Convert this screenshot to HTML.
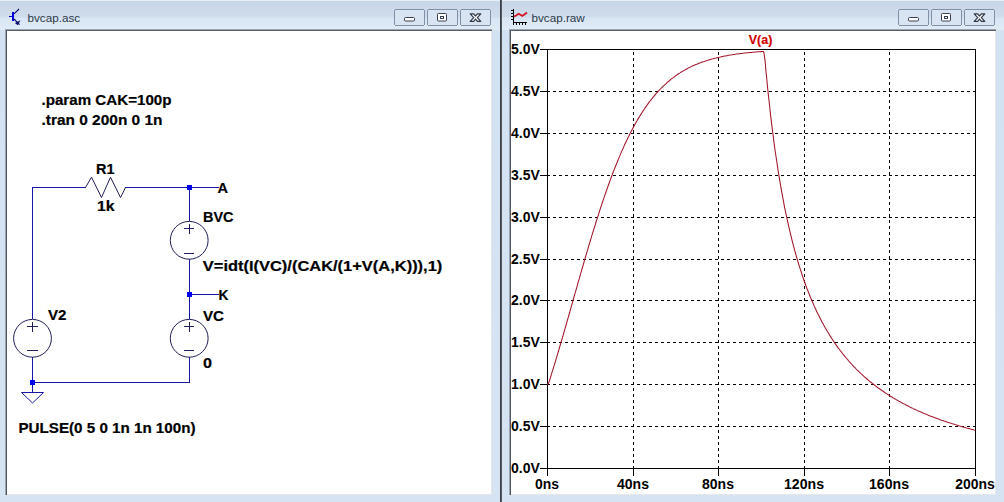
<!DOCTYPE html>
<html><head><meta charset="utf-8"><style>
html,body{margin:0;padding:0;background:#d2e0ef;overflow:hidden;}
svg{display:block;}
.tt{font-family:"Liberation Sans",sans-serif;font-size:11.7px;fill:#2a3848;}
.btn rect{fill:#d8e4f1;stroke:#8090a6;stroke-width:1;}
.w{stroke:#1818a8;stroke-width:1;fill:none;}
.c{stroke:#20205a;stroke-width:1;fill:none;}
.jn{fill:#0000f0;}
.sl{font-family:"Liberation Sans",sans-serif;font-weight:bold;font-size:14px;fill:#000;stroke:#000;stroke-width:0.2px;}
.yl{font-family:"Liberation Sans",sans-serif;font-weight:bold;font-size:14.5px;fill:#000;}
.ax{stroke:#000;stroke-width:1;}
.dash{stroke:#000;stroke-width:1;stroke-dasharray:3 3;}
</style></head><body>
<svg width="1004" height="502" viewBox="0 0 1004 502" shape-rendering="crispEdges">
<defs>
<linearGradient id="title" x1="0" y1="0" x2="0" y2="30" gradientUnits="userSpaceOnUse">
<stop offset="0" stop-color="#c6d5e7"/><stop offset="0.55" stop-color="#cfdcec"/><stop offset="0.62" stop-color="#d9e6f4"/><stop offset="1" stop-color="#e0ebf7"/>
</linearGradient>
<linearGradient id="side" x1="0" y1="0" x2="0" y2="502" gradientUnits="userSpaceOnUse">
<stop offset="0" stop-color="#d3e2f2"/><stop offset="1" stop-color="#d5e3f3"/>
</linearGradient>
</defs>

<g transform="translate(-4,0)">
  <rect x="0" y="0" width="505" height="502" fill="url(#side)"/>
  <rect x="0" y="0" width="505" height="30" fill="url(#title)"/>
  <rect x="0" y="0" width="505" height="1" fill="#e9eff6"/>
  <rect x="11" y="31" width="484" height="463" fill="#fff"/>
  <rect x="9" y="29" width="1" height="466" fill="#9aa4b2"/>
  <rect x="9" y="29" width="487" height="1" fill="#9aa4b2"/>
  <rect x="10" y="30" width="1" height="465" fill="#50565f"/>
  <rect x="10" y="30" width="486" height="1" fill="#585e68"/>
  <rect x="495" y="31" width="1" height="464" fill="#e4e6ea"/>
  <rect x="11" y="494" width="485" height="1" fill="#e4e6ea"/>
  <g shape-rendering="crispEdges">
  <rect x="16" y="12" width="2" height="9" fill="#0000e0"/>
  <rect x="13" y="16" width="3" height="1" fill="#0000c0"/>
</g>
<g stroke="#101070" stroke-width="1.1" fill="none" shape-rendering="auto">
  <line x1="18" y1="13.8" x2="23" y2="9"/>
  <line x1="18" y1="19" x2="23.6" y2="24.6"/>
  <path d="M20.2,23.2 L22.8,21.8 L21.6,24.2 Z" fill="#101070" stroke-width="1.4"/>
</g>
  <text x="31.5" y="21.5" class="tt">bvcap.asc</text>
  <g class="btn">
    <rect x="398.5" y="9.5" width="30" height="16" rx="2"/>
    <rect x="431.5" y="9.5" width="30" height="16" rx="2"/>
    <rect x="464.5" y="9.5" width="30" height="16" rx="2"/>
  </g>
  <rect x="408.5" y="17.5" width="10" height="3.5" rx="1" fill="#fff" stroke="#3a4250" stroke-width="1" shape-rendering="geometricPrecision"/>
  <rect x="441.5" y="13.5" width="9" height="7.5" rx="0.8" fill="#fff" stroke="#3a4250" stroke-width="1" shape-rendering="geometricPrecision"/>
  <rect x="444.5" y="16.5" width="3" height="2" fill="none" stroke="#3a4250" stroke-width="1" shape-rendering="geometricPrecision"/>
  <path d="M474.2,13.8 H477.6 L479.5,16 L481.4,13.8 H484.8 L481.3,17.6 L484.8,21.4 H481.4 L479.5,19.2 L477.6,21.4 H474.2 L477.7,17.6 Z" fill="#fff" stroke="#2e3644" stroke-width="1.15" stroke-linejoin="round" shape-rendering="auto"/>
</g>

<g transform="translate(500,0)">
  <rect x="0" y="0" width="505" height="502" fill="url(#side)"/>
  <rect x="0" y="0" width="505" height="30" fill="url(#title)"/>
  <rect x="0" y="0" width="505" height="1" fill="#e9eff6"/>
  <rect x="11" y="31" width="484" height="463" fill="#fff"/>
  <rect x="9" y="29" width="1" height="466" fill="#9aa4b2"/>
  <rect x="9" y="29" width="487" height="1" fill="#9aa4b2"/>
  <rect x="10" y="30" width="1" height="465" fill="#50565f"/>
  <rect x="10" y="30" width="486" height="1" fill="#585e68"/>
  <rect x="495" y="31" width="1" height="464" fill="#e4e6ea"/>
  <rect x="11" y="494" width="485" height="1" fill="#e4e6ea"/>
  <g fill="none" stroke-width="1">
  <path d="M13.5,9 V22.5 H27" stroke="#000"/>
  <path d="M11,10.5 H13 M11,13.5 H13 M11,16.5 H13 M11,19.5 H13 M13.5,23 V25 M16.5,23 V25 M19.5,23 V25 M22.5,23 V25 M25.5,23 V25" stroke="#000"/>
  <path d="M14,16.7 L18.7,13.7 L22.4,16 L27,12.5" stroke="#d81020" stroke-width="1.8" shape-rendering="auto"/>
</g>
  <text x="31.5" y="21.5" class="tt">bvcap.raw</text>
  <g class="btn">
    <rect x="398.5" y="9.5" width="30" height="16" rx="2"/>
    <rect x="431.5" y="9.5" width="30" height="16" rx="2"/>
    <rect x="464.5" y="9.5" width="30" height="16" rx="2"/>
  </g>
  <rect x="408.5" y="17.5" width="10" height="3.5" rx="1" fill="#fff" stroke="#3a4250" stroke-width="1" shape-rendering="geometricPrecision"/>
  <rect x="441.5" y="13.5" width="9" height="7.5" rx="0.8" fill="#fff" stroke="#3a4250" stroke-width="1" shape-rendering="geometricPrecision"/>
  <rect x="444.5" y="16.5" width="3" height="2" fill="none" stroke="#3a4250" stroke-width="1" shape-rendering="geometricPrecision"/>
  <path d="M474.2,13.8 H477.6 L479.5,16 L481.4,13.8 H484.8 L481.3,17.6 L484.8,21.4 H481.4 L479.5,19.2 L477.6,21.4 H474.2 L477.7,17.6 Z" fill="#fff" stroke="#2e3644" stroke-width="1.15" stroke-linejoin="round" shape-rendering="auto"/>
</g>
<rect x="500" y="0" width="1" height="502" fill="#3a3f48"/>
<rect x="501" y="0" width="1" height="502" fill="#555a63"/>

<!-- schematic -->
<text x="41.5" y="105" class="sl" textLength="130" lengthAdjust="spacingAndGlyphs">.param CAK=100p</text>
<text x="41.5" y="125" class="sl" textLength="121" lengthAdjust="spacingAndGlyphs">.tran 0 200n 0 1n</text>
<g class="w">
<path d="M32.5,319 V187.5 H86"/>
<path d="M125,187.5 H219"/>
<path d="M189.5,187.5 V221"/>
<path d="M189.5,259 V319"/>
<path d="M189.5,294.5 H219"/>
<path d="M189.5,357 V382.5 H32.5 V357"/>
<path d="M32.5,382 V392.5"/>
</g>
<g class="c" shape-rendering="auto">
<path d="M85.5,187.5 L91.5,177.2 L101.5,197.5 L110.5,177.2 L120.5,197.5 L125.5,187.5"/>
<circle cx="189.2" cy="240.3" r="18.9"/>
<circle cx="189.2" cy="338.3" r="18.9"/>
<circle cx="32.5" cy="338.3" r="18.9"/>
</g>
<g class="c">
<path d="M184,228.5 H194 M189.5,223.5 V234 M184,253.5 H194"/>
<path d="M184,326.5 H194 M189.5,321.5 V332 M184,350.5 H194"/>
<path d="M27,326.5 H38 M32.5,321.5 V332 M27,350.5 H38"/>
</g>
<path d="M21.5,392.5 H43.5 L32.5,403 Z" class="w" shape-rendering="auto"/>
<rect x="187" y="185" width="5" height="5" class="jn"/>
<rect x="187" y="292" width="5" height="5" class="jn"/>
<rect x="30" y="380" width="5" height="5" class="jn"/>
<text x="96" y="174" class="sl" textLength="18.5" lengthAdjust="spacingAndGlyphs">R1</text>
<text x="97" y="211" class="sl" textLength="17.5" lengthAdjust="spacingAndGlyphs">1k</text>
<text x="217.5" y="193" class="sl" textLength="10.5" lengthAdjust="spacingAndGlyphs">A</text>
<text x="203" y="222" class="sl" textLength="30.5" lengthAdjust="spacingAndGlyphs">BVC</text>
<text x="202.8" y="271" class="sl" textLength="239.5" lengthAdjust="spacingAndGlyphs">V=idt(I(VC)/(CAK/(1+V(A,K))),1)</text>
<text x="218.5" y="300" class="sl" textLength="10" lengthAdjust="spacingAndGlyphs">K</text>
<text x="203" y="320.5" class="sl" textLength="21" lengthAdjust="spacingAndGlyphs">VC</text>
<text x="203" y="368" class="sl" textLength="9" lengthAdjust="spacingAndGlyphs">0</text>
<text x="48" y="320" class="sl" textLength="18.5" lengthAdjust="spacingAndGlyphs">V2</text>
<text x="18.5" y="432.5" class="sl" textLength="177" lengthAdjust="spacingAndGlyphs">PULSE(0 5 0 1n 1n 100n)</text>

<!-- plot -->
<line x1="547" y1="91.5" x2="975" y2="91.5" class="dash"/><line x1="540" y1="91.5" x2="547" y2="91.5" class="ax"/><line x1="547" y1="133.5" x2="975" y2="133.5" class="dash"/><line x1="540" y1="133.5" x2="547" y2="133.5" class="ax"/><line x1="547" y1="175.5" x2="975" y2="175.5" class="dash"/><line x1="540" y1="175.5" x2="547" y2="175.5" class="ax"/><line x1="547" y1="217.5" x2="975" y2="217.5" class="dash"/><line x1="540" y1="217.5" x2="547" y2="217.5" class="ax"/><line x1="547" y1="259.5" x2="975" y2="259.5" class="dash"/><line x1="540" y1="259.5" x2="547" y2="259.5" class="ax"/><line x1="547" y1="300.5" x2="975" y2="300.5" class="dash"/><line x1="540" y1="300.5" x2="547" y2="300.5" class="ax"/><line x1="547" y1="342.5" x2="975" y2="342.5" class="dash"/><line x1="540" y1="342.5" x2="547" y2="342.5" class="ax"/><line x1="547" y1="384.5" x2="975" y2="384.5" class="dash"/><line x1="540" y1="384.5" x2="547" y2="384.5" class="ax"/><line x1="547" y1="426.5" x2="975" y2="426.5" class="dash"/><line x1="540" y1="426.5" x2="547" y2="426.5" class="ax"/><line x1="633.5" y1="469" x2="633.5" y2="49" class="dash"/><line x1="633.5" y1="468" x2="633.5" y2="476" class="ax"/><line x1="718.5" y1="469" x2="718.5" y2="49" class="dash"/><line x1="718.5" y1="468" x2="718.5" y2="476" class="ax"/><line x1="804.5" y1="469" x2="804.5" y2="49" class="dash"/><line x1="804.5" y1="468" x2="804.5" y2="476" class="ax"/><line x1="889.5" y1="469" x2="889.5" y2="49" class="dash"/><line x1="889.5" y1="468" x2="889.5" y2="476" class="ax"/><line x1="540" y1="49.5" x2="547" y2="49.5" class="ax"/><line x1="540" y1="468.5" x2="547" y2="468.5" class="ax"/><line x1="547.5" y1="468" x2="547.5" y2="476" class="ax"/><line x1="975.5" y1="468" x2="975.5" y2="476" class="ax"/>
<rect x="547.5" y="49.5" width="428" height="419" fill="none" class="ax"/>
<text x="539.8" y="54" class="yl" text-anchor="end" textLength="28.8" lengthAdjust="spacingAndGlyphs">5.0V</text><text x="539.8" y="96" class="yl" text-anchor="end" textLength="28.8" lengthAdjust="spacingAndGlyphs">4.5V</text><text x="539.8" y="138" class="yl" text-anchor="end" textLength="28.8" lengthAdjust="spacingAndGlyphs">4.0V</text><text x="539.8" y="180" class="yl" text-anchor="end" textLength="28.8" lengthAdjust="spacingAndGlyphs">3.5V</text><text x="539.8" y="222" class="yl" text-anchor="end" textLength="28.8" lengthAdjust="spacingAndGlyphs">3.0V</text><text x="539.8" y="264" class="yl" text-anchor="end" textLength="28.8" lengthAdjust="spacingAndGlyphs">2.5V</text><text x="539.8" y="305" class="yl" text-anchor="end" textLength="28.8" lengthAdjust="spacingAndGlyphs">2.0V</text><text x="539.8" y="347" class="yl" text-anchor="end" textLength="28.8" lengthAdjust="spacingAndGlyphs">1.5V</text><text x="539.8" y="389" class="yl" text-anchor="end" textLength="28.8" lengthAdjust="spacingAndGlyphs">1.0V</text><text x="539.8" y="431" class="yl" text-anchor="end" textLength="28.8" lengthAdjust="spacingAndGlyphs">0.5V</text><text x="539.8" y="473" class="yl" text-anchor="end" textLength="28.8" lengthAdjust="spacingAndGlyphs">0.0V</text>
<text x="547" y="489" class="yl" text-anchor="middle" textLength="24" lengthAdjust="spacingAndGlyphs">0ns</text><text x="633" y="489" class="yl" text-anchor="middle" textLength="32" lengthAdjust="spacingAndGlyphs">40ns</text><text x="718" y="489" class="yl" text-anchor="middle" textLength="32" lengthAdjust="spacingAndGlyphs">80ns</text><text x="804" y="489" class="yl" text-anchor="middle" textLength="40" lengthAdjust="spacingAndGlyphs">120ns</text><text x="889" y="489" class="yl" text-anchor="middle" textLength="40" lengthAdjust="spacingAndGlyphs">160ns</text><text x="975" y="489" class="yl" text-anchor="middle" textLength="39.5" lengthAdjust="spacingAndGlyphs">200ns</text>
<text x="748.8" y="44" class="yl" style="fill:#d00000;stroke:#d00000;stroke-width:0.2px;font-size:13.5px" textLength="23.5" lengthAdjust="spacingAndGlyphs">V(a)</text>
<polyline points="547.0,384.2 548.1,384.0 549.1,381.7 550.2,378.3 551.3,374.9 552.3,371.4 553.4,367.9 554.5,364.4 555.6,360.9 556.6,357.3 557.7,353.7 558.8,350.1 559.8,346.5 560.9,342.8 562.0,339.1 563.1,335.5 564.1,331.7 565.2,328.0 566.3,324.3 567.3,320.6 568.4,316.8 569.5,313.0 570.5,309.3 571.6,305.5 572.7,301.7 573.7,298.0 574.8,294.2 575.9,290.4 577.0,286.7 578.0,282.9 579.1,279.2 580.2,275.4 581.2,271.7 582.3,268.0 583.4,264.3 584.4,260.6 585.5,256.9 586.6,253.3 587.7,249.7 588.7,246.1 589.8,242.5 590.9,238.9 591.9,235.4 593.0,231.9 594.1,228.4 595.2,225.0 596.2,221.5 597.3,218.2 598.4,214.8 599.4,211.5 600.5,208.2 601.6,205.0 602.6,201.7 603.7,198.6 604.8,195.4 605.9,192.3 606.9,189.3 608.0,186.3 609.1,183.3 610.1,180.4 611.2,177.5 612.3,174.6 613.3,171.8 614.4,169.1 615.5,166.3 616.6,163.7 617.6,161.0 618.7,158.4 619.8,155.9 620.8,153.4 621.9,150.9 623.0,148.5 624.0,146.1 625.1,143.8 626.2,141.5 627.3,139.3 628.3,137.1 629.4,134.9 630.5,132.8 631.5,130.7 632.6,128.7 633.7,126.7 634.7,124.8 635.8,122.8 636.9,121.0 637.9,119.1 639.0,117.4 640.1,115.6 641.2,113.9 642.2,112.2 643.3,110.6 644.4,109.0 645.4,107.4 646.5,105.9 647.6,104.4 648.6,102.9 649.7,101.5 650.8,100.1 651.9,98.7 652.9,97.4 654.0,96.1 655.1,94.8 656.1,93.6 657.2,92.4 658.3,91.2 659.3,90.1 660.4,89.0 661.5,87.9 662.6,86.8 663.6,85.8 664.7,84.8 665.8,83.8 666.8,82.8 667.9,81.9 669.0,81.0 670.0,80.1 671.1,79.2 672.2,78.4 673.3,77.6 674.3,76.8 675.4,76.0 676.5,75.2 677.5,74.5 678.6,73.8 679.7,73.1 680.7,72.4 681.8,71.7 682.9,71.1 684.0,70.5 685.0,69.9 686.1,69.3 687.2,68.7 688.2,68.1 689.3,67.6 690.4,67.1 691.4,66.6 692.5,66.1 693.6,65.6 694.7,65.1 695.7,64.6 696.8,64.2 697.9,63.7 698.9,63.3 700.0,62.9 701.1,62.5 702.1,62.1 703.2,61.7 704.3,61.4 705.4,61.0 706.4,60.7 707.5,60.3 708.6,60.0 709.6,59.7 710.7,59.4 711.8,59.1 712.9,58.8 713.9,58.5 715.0,58.2 716.1,58.0 717.1,57.7 718.2,57.4 719.3,57.2 720.3,57.0 721.4,56.7 722.5,56.5 723.6,56.3 724.6,56.1 725.7,55.9 726.8,55.7 727.8,55.5 728.9,55.3 730.0,55.1 731.0,54.9 732.1,54.8 733.2,54.6 734.3,54.4 735.3,54.3 736.4,54.1 737.5,54.0 738.5,53.8 739.6,53.7 740.7,53.5 741.7,53.4 742.8,53.3 743.9,53.1 745.0,53.0 746.0,52.9 747.1,52.8 748.2,52.7 749.2,52.6 750.3,52.5 751.4,52.4 752.4,52.3 753.5,52.2 754.6,52.1 755.7,52.0 756.7,51.9 757.8,51.8 758.9,51.7 759.9,51.7 761.0,51.6 761.2,51.6 761.4,51.5 761.6,51.5 761.9,51.5 762.1,51.5 762.3,51.5 762.5,51.5 762.7,51.5 762.9,51.4 763.1,51.4 763.4,51.5 763.6,51.9 763.8,52.5 764.0,53.3 764.2,54.4 764.4,55.8 764.6,57.3 764.9,59.1 765.1,61.1 765.3,63.4 765.5,65.7 765.7,68.1 765.9,70.4 766.1,72.6 766.4,74.9 766.6,77.1 766.8,79.3 767.0,81.5 767.2,83.6 767.4,85.8 768.5,96.1 769.6,106.0 770.6,115.4 771.7,124.4 772.8,133.0 773.8,141.1 774.9,149.0 776.0,156.5 777.1,163.7 778.1,170.6 779.2,177.2 780.3,183.6 781.3,189.7 782.4,195.6 783.5,201.3 784.5,206.8 785.6,212.1 786.7,217.2 787.8,222.1 788.8,226.8 789.9,231.4 791.0,235.9 792.0,240.2 793.1,244.4 794.2,248.4 795.2,252.3 796.3,256.1 797.4,259.8 798.5,263.4 799.5,266.8 800.6,270.2 801.7,273.5 802.7,276.7 803.8,279.8 804.9,282.8 805.9,285.7 807.0,288.6 808.1,291.3 809.2,294.1 810.2,296.7 811.3,299.3 812.4,301.8 813.4,304.2 814.5,306.6 815.6,309.0 816.6,311.2 817.7,313.5 818.8,315.6 819.9,317.8 820.9,319.8 822.0,321.9 823.1,323.8 824.1,325.8 825.2,327.7 826.3,329.5 827.3,331.3 828.4,333.1 829.5,334.9 830.6,336.6 831.6,338.2 832.7,339.9 833.8,341.5 834.8,343.1 835.9,344.6 837.0,346.1 838.0,347.6 839.1,349.0 840.2,350.5 841.3,351.9 842.3,353.2 843.4,354.6 844.5,355.9 845.5,357.2 846.6,358.5 847.7,359.7 848.7,361.0 849.8,362.2 850.9,363.4 852.0,364.5 853.0,365.7 854.1,366.8 855.2,367.9 856.2,369.0 857.3,370.1 858.4,371.1 859.4,372.2 860.5,373.2 861.6,374.2 862.7,375.2 863.7,376.1 864.8,377.1 865.9,378.0 866.9,379.0 868.0,379.9 869.1,380.8 870.1,381.6 871.2,382.5 872.3,383.4 873.4,384.2 874.4,385.0 875.5,385.9 876.6,386.7 877.6,387.5 878.7,388.3 879.8,389.0 880.8,389.8 881.9,390.5 883.0,391.3 884.1,392.0 885.1,392.7 886.2,393.4 887.3,394.1 888.3,394.8 889.4,395.5 890.5,396.2 891.5,396.8 892.6,397.5 893.7,398.1 894.8,398.8 895.8,399.4 896.9,400.0 898.0,400.6 899.0,401.2 900.1,401.8 901.2,402.4 902.2,403.0 903.3,403.6 904.4,404.1 905.5,404.7 906.5,405.3 907.6,405.8 908.7,406.3 909.7,406.9 910.8,407.4 911.9,407.9 912.9,408.4 914.0,408.9 915.1,409.4 916.2,409.9 917.2,410.4 918.3,410.9 919.4,411.4 920.4,411.8 921.5,412.3 922.6,412.8 923.6,413.2 924.7,413.7 925.8,414.1 926.9,414.6 927.9,415.0 929.0,415.4 930.1,415.9 931.1,416.3 932.2,416.7 933.3,417.1 934.3,417.5 935.4,417.9 936.5,418.3 937.6,418.7 938.6,419.1 939.7,419.5 940.8,419.9 941.8,420.2 942.9,420.6 944.0,421.0 945.0,421.3 946.1,421.7 947.2,422.1 948.3,422.4 949.3,422.8 950.4,423.1 951.5,423.5 952.5,423.8 953.6,424.1 954.7,424.5 955.7,424.8 956.8,425.1 957.9,425.4 959.0,425.8 960.0,426.1 961.1,426.4 962.2,426.7 963.2,427.0 964.3,427.3 965.4,427.6 966.4,427.9 967.5,428.2 968.6,428.5 969.7,428.8 970.7,429.1 971.8,429.4 972.9,429.6 973.9,429.9 975.0,430.2" fill="none" stroke="#a01428" stroke-width="1.05" shape-rendering="auto"/>
</svg>
</body></html>
